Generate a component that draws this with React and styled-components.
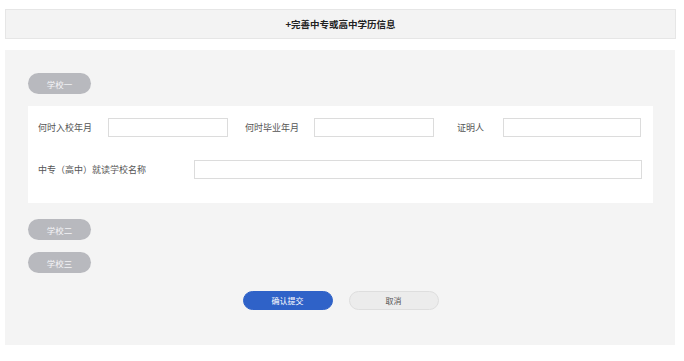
import styled, { createGlobalStyle } from 'styled-components'

const Global = createGlobalStyle`
	body {
		margin: 0;
		background: #fff;
		font-family: "Noto Sans CJK SC", "Noto Sans", sans-serif;
	}
`

const Page = styled.div`
	width: 671px;
	padding: 9px 0 0 5px;
`

const Header = styled.div`
	height: 28px;
	background: #f3f3f3;
	border: 1px solid #e6e6e6;
	display: flex;
	align-items: center;
	justify-content: center;
	font-size: 9.5px;
	font-weight: 700;
	color: #222;
`

const Panel = styled.div`
	margin-top: 11px;
	width: 670px;
	height: 295px;
	box-sizing: border-box;
	background: #f4f4f4;
	padding: 23px 22px 0 23px;
	display: flex;
	flex-direction: column;
`

const Pill = styled.div`
	width: 63px;
	height: 21px;
	border-radius: 11px;
	background: #b8b9be;
	color: #f4f4f6;
	font-size: 8.5px;
	display: flex;
	align-items: center;
	justify-content: center;
	margin-top: ${p => p.$top || 0}px;
`

const Card = styled.div`
	margin-top: 12px;
	background: #fff;
	padding: 12px 11px 24px 10px;
	display: flex;
	flex-direction: column;
	gap: 23px;
`

const Row = styled.div`
	display: flex;
	align-items: center;
`

const Label = styled.span`
	width: ${p => p.$w}px;
	margin-left: ${p => p.$ml || 0}px;
	flex-shrink: 0;
	font-size: 9px;
	color: #555;
`

const Input = styled.div`
	box-sizing: border-box;
	width: ${p => (p.$w ? `${p.$w}px` : 'auto')};
	flex: ${p => (p.$w ? '0 0 auto' : 1)};
	height: 19px;
	border: 1px solid #dcdcdc;
	background: #fff;
`

const Actions = styled.div`
	margin-top: 18px;
	display: flex;
	justify-content: center;
	gap: 16px;
`

const Button = styled.div`
	width: 90px;
	height: 19px;
	border-radius: 10px;
	box-sizing: border-box;
	display: flex;
	align-items: center;
	justify-content: center;
	font-size: 8px;
	background: ${p => (p.$primary ? '#2f62c8' : '#ececec')};
	color: ${p => (p.$primary ? '#fff' : '#555')};
	border: 1px solid ${p => (p.$primary ? '#2f62c8' : '#dedede')};
`

export default function App() {
	return (
		<>
			<Global />
			<Page>
				<Header>+完善中专或高中学历信息</Header>
				<Panel>
					<Pill>学校一</Pill>
					<Card>
						<Row>
							<Label $w={70}>何时入校年月</Label>
							<Input $w={120} />
							<Label $w={69} $ml={17}>何时毕业年月</Label>
							<Input $w={120} />
							<Label $w={46} $ml={23}>证明人</Label>
							<Input $w={138} />
						</Row>
						<Row>
							<Label $w={156}>中专（高中）就读学校名称</Label>
							<Input />
						</Row>
					</Card>
					<Pill $top={16}>学校二</Pill>
					<Pill $top={12}>学校三</Pill>
					<Actions>
						<Button $primary>确认提交</Button>
						<Button>取消</Button>
					</Actions>
				</Panel>
			</Page>
		</>
	)
}
